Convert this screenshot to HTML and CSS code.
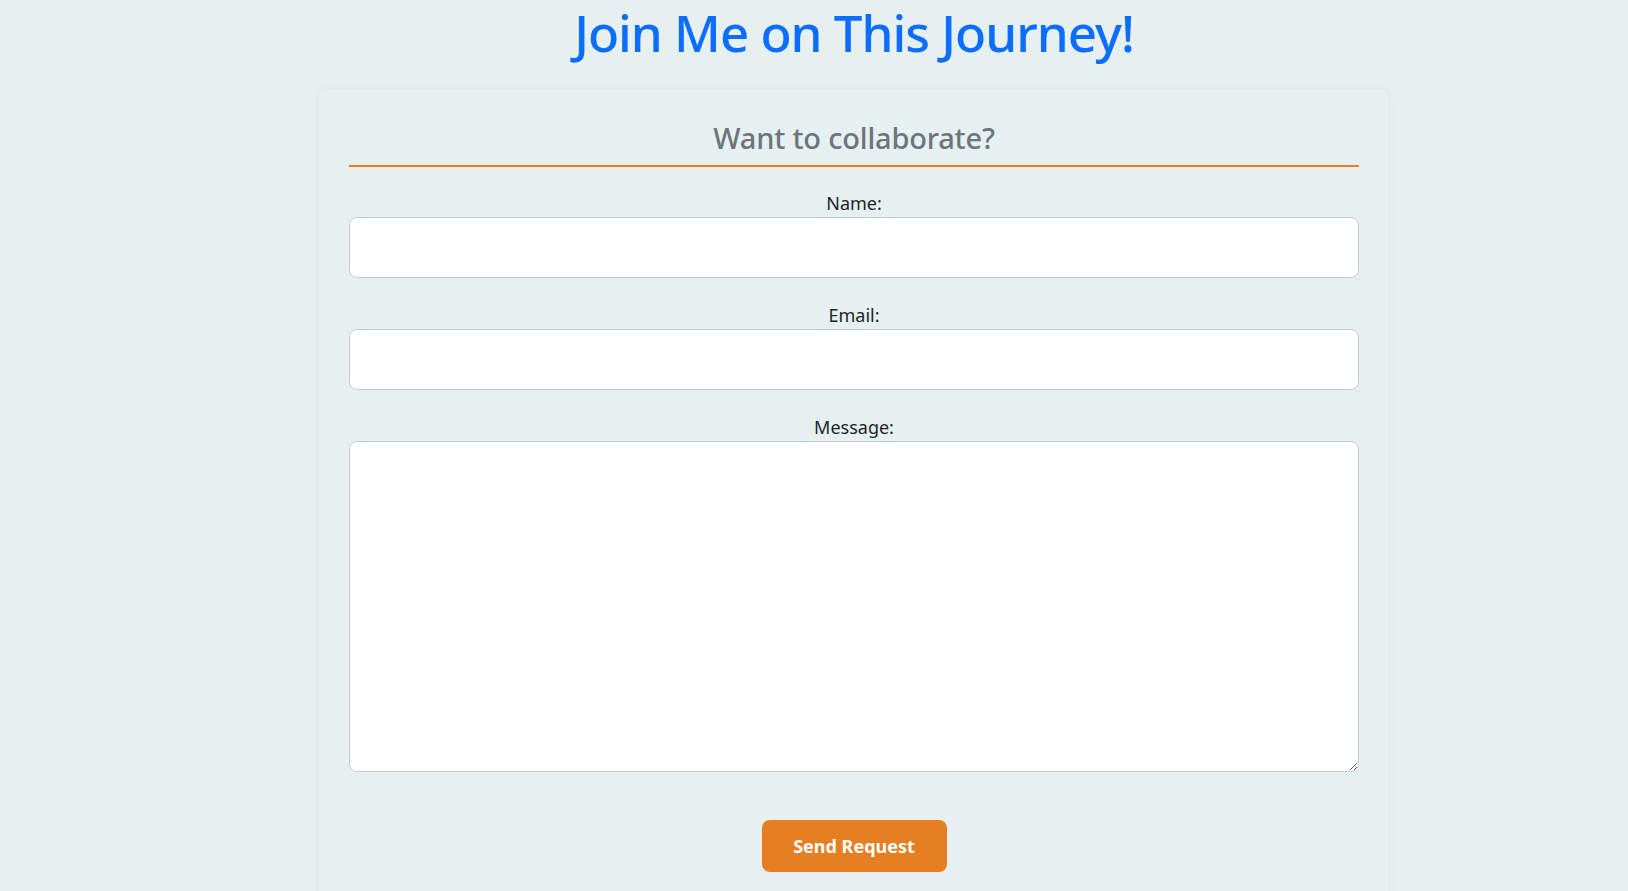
FILE: index.html
```html
<!DOCTYPE html>
<html lang="en">
<head>
<meta charset="utf-8">
<title>Join Me on This Journey!</title>
<link rel="stylesheet" href="styles.css">
</head>
<body>
<main class="page">
  <h1 class="title">Join Me on This Journey!</h1>
  <section class="card">
    <h2 class="subtitle">Want to collaborate?</h2>
    <form class="form">
      <label class="label" for="name">Name:</label>
      <input class="field" id="name" type="text">
      <label class="label" for="email">Email:</label>
      <input class="field" id="email" type="email">
      <label class="label" for="message">Message:</label>
      <textarea class="field area" id="message"></textarea>
      <div class="actions">
        <button class="btn" type="button">Send Request</button>
      </div>
    </form>
  </section>
</main>
</body>
</html>
```
FILE: styles.css
```css
html, body {
  margin: 0;
  padding: 0;
  background: #e7f0f1;
}
body {
  font-family: "Noto Sans", "Open Sans", sans-serif;
  color: #212529;
  overflow: hidden;
}
.page {
  padding-left: 80px;
  display: flex;
  flex-direction: column;
  align-items: center;
}
.title {
  margin: 0;
  padding-top: 0;
  font-size: 51px;
  font-weight: 500;
  line-height: 64px;
  color: #0d6efd;
  letter-spacing: -1px;
}
.card {
  box-sizing: border-box;
  width: 1070px;
  margin-top: 25px;
  padding: 28px 30px 30px;
  border-radius: 8px;
  background: #e7f0f1;
  box-shadow: 0 0 6px rgba(0, 0, 0, 0.06);
}
.subtitle {
  margin: 0 0 26px;
  padding-bottom: 6px;
  text-align: center;
  font-size: 29px;
  font-weight: 500;
  line-height: 42px;
  letter-spacing: -0.2px;
  color: #6c757d;
  border-bottom: 2px solid #e67e22;
}
.form {
  display: flex;
  flex-direction: column;
}
.label {
  display: block;
  text-align: center;
  font-size: 18px;
  line-height: 20px;
  padding-bottom: 4px;
  color: #212529;
}
.field {
  box-sizing: border-box;
  width: 100%;
  height: 61px;
  margin: 0 0 27px;
  border: 1px solid #c9cccd;
  border-radius: 8px;
  background: #fff;
  font: inherit;
}
.area {
  height: 331px;
  margin-bottom: 0;
  resize: vertical;
}
.actions {
  display: flex;
  justify-content: center;
  margin-top: 48px;
}
.btn {
  width: 185px;
  height: 52px;
  border: 0;
  border-radius: 8px;
  background: #e67e22;
  color: #fff;
  font-family: inherit;
  font-size: 18px;
  font-weight: 700;
}
```
